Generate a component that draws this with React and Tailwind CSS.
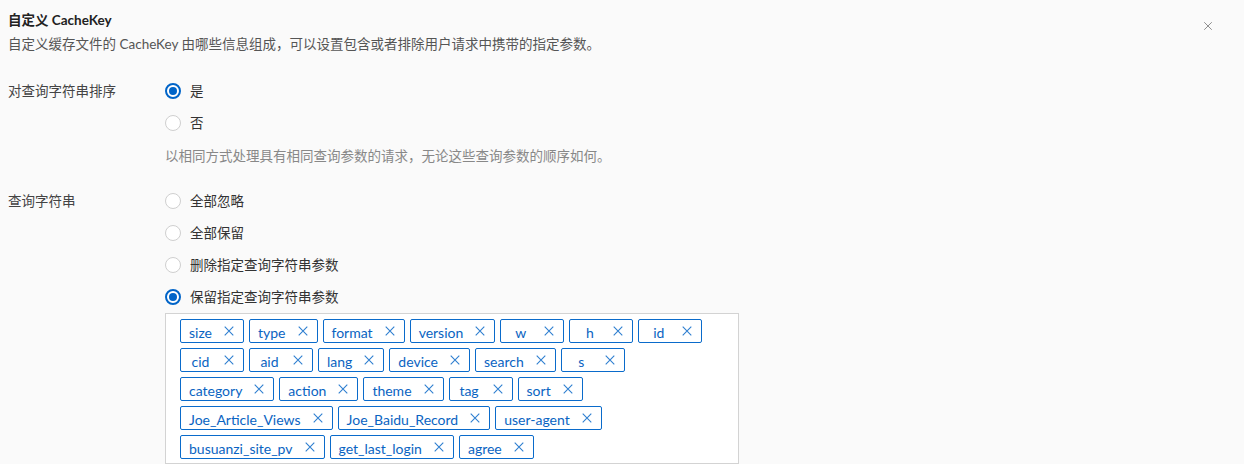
import React, { useState } from 'react';
import { X } from 'lucide-react';

const params = [
  'size', 'type', 'format', 'version', 'w', 'h', 'id',
  'cid', 'aid', 'lang', 'device', 'search', 's',
  'category', 'action', 'theme', 'tag', 'sort',
  'Joe_Article_Views', 'Joe_Baidu_Record', 'user-agent',
  'busuanzi_site_pv', 'get_last_login', 'agree',
];

const Radio = ({ checked, label, onClick }) => (
  <label onClick={onClick} className="flex items-center h-8 cursor-pointer">
    <span
      className={`w-4 h-4 rounded-full bg-white flex items-center justify-center ${
        checked ? 'border-2 border-[#0064c8]' : 'border border-[#cfcfcf]'
      }`}
    >
      {checked && <span className="w-2 h-2 rounded-full bg-[#0064c8]" />}
    </span>
    <span className="ml-[9px] text-[#333]">{label}</span>
  </label>
);

const Tag = ({ name }) => (
  <span className="h-6 flex items-center border border-[#0a6bcb] rounded-[2px] pl-2 pr-[9px] text-[#0a64c2] bg-white text-[14px]">
    <span className="min-w-[23px] text-center leading-none pt-[3px]">{name}</span>
    <svg className="ml-3" width="10" height="10" viewBox="0 0 10 10">
      <path d="M0.7 0.7L9.3 9.3M9.3 0.7L0.7 9.3" stroke="#2f7fd0" strokeWidth="1.1" fill="none" />
    </svg>
  </span>
);

export default function App() {
  const [sort, setSort] = useState('yes');
  const [mode, setMode] = useState('keep');

  return (
    <div
      className="w-[1244px] h-[464px] overflow-hidden bg-[#fafafa] text-[13.5px] pl-2"
      style={{ fontFamily: 'Lato, "Noto Sans CJK SC", sans-serif' }}
    >
      <div className="flex justify-between pt-[10px]">
        <div>
          <div className="font-bold text-[#222] leading-5">自定义 CacheKey</div>
          <div className="mt-1 text-[#555] leading-5">
            自定义缓存文件的 CacheKey 由哪些信息组成，可以设置包含或者排除用户请求中携带的指定参数。
          </div>
        </div>
        <button className="mr-[29px] mt-[9px] h-[14px] text-[#777]">
          <X size={14} strokeWidth={1.4} />
        </button>
      </div>

      <div className="flex mt-[21px]">
        <div className="w-[157px] h-8 flex items-center text-[#444]">对查询字符串排序</div>
        <div>
          <Radio checked={sort === 'yes'} label="是" onClick={() => setSort('yes')} />
          <Radio checked={sort === 'no'} label="否" onClick={() => setSort('no')} />
          <div className="mt-2 leading-[18px] text-[#888]">
            以相同方式处理具有相同查询参数的请求，无论这些查询参数的顺序如何。
          </div>
        </div>
      </div>

      <div className="flex mt-[20px]">
        <div className="w-[157px] h-8 flex items-center text-[#444]">查询字符串</div>
        <div>
          <Radio checked={mode === 'ignore'} label="全部忽略" onClick={() => setMode('ignore')} />
          <Radio checked={mode === 'all'} label="全部保留" onClick={() => setMode('all')} />
          <Radio checked={mode === 'remove'} label="删除指定查询字符串参数" onClick={() => setMode('remove')} />
          <Radio checked={mode === 'keep'} label="保留指定查询字符串参数" onClick={() => setMode('keep')} />
          <div className="w-[574px] h-[151px] border border-[#d3d3d3] bg-white pl-[14px] pr-[20px] pt-[5px] flex flex-wrap content-start gap-x-[5px] gap-y-[5px]">
            {params.map((p) => (
              <Tag key={p} name={p} />
            ))}
          </div>
        </div>
      </div>
    </div>
  );
}
